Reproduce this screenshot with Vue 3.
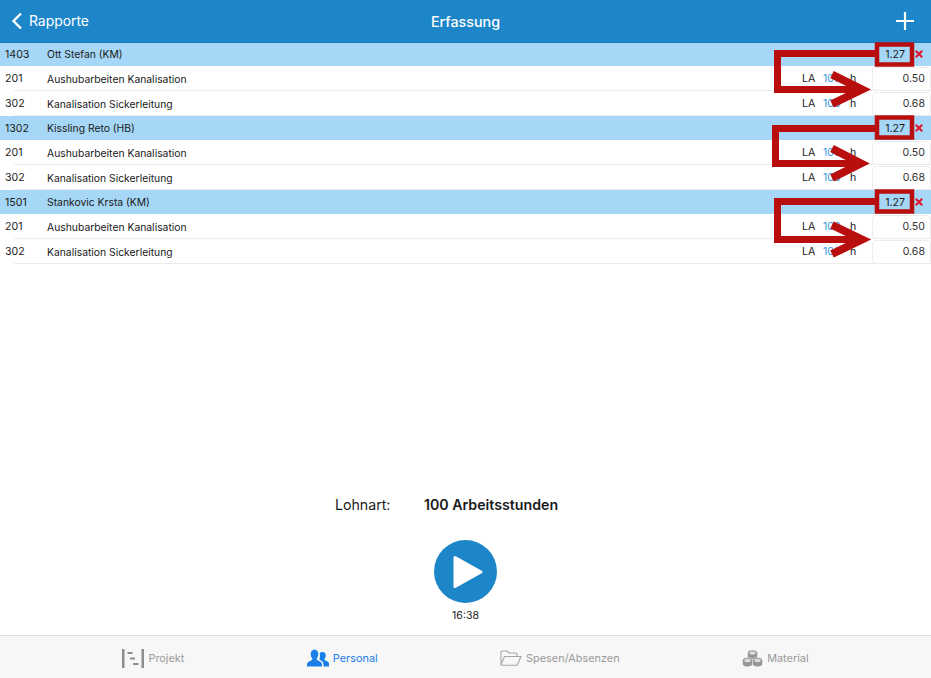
<script setup>
const groups = [
  { id: '1403', name: 'Ott Stefan (KM)' },
  { id: '1302', name: 'Kissling Reto (HB)' },
  { id: '1501', name: 'Stankovic Krsta (KM)' },
]
const lines = [
  { id: '201', name: 'Aushubarbeiten Kanalisation', value: '0.50' },
  { id: '302', name: 'Kanalisation Sickerleitung', value: '0.68' },
]
const marks = [
  { box: 44.5, line: 'M875 53.5H777.5V89.5H862', head: 'M832 74.5L862 89.5L832 104' },
  { box: 117.5, line: 'M875 128.5H775.5V163.5H861', head: 'M832 148.5L861 163.5L832 178' },
  { box: 191.5, line: 'M875 201.5H777.5V239.5H862', head: 'M832 225L862 239.5L832 254' },
]
const cubes = [
  { x: 5.5, y: 0 },
  { x: 0.5, y: 7.5 },
  { x: 10.5, y: 7.5 },
]
</script>

<template>
  <div class="screen">
    <header class="nav">
      <div class="back">
        <svg width="12" height="18" viewBox="0 0 12 18"><path d="M10 1.5L2.5 9L10 16.5" fill="none" stroke="#fff" stroke-width="2.4" /></svg>
        <span>Rapporte</span>
      </div>
      <div class="title">Erfassung</div>
      <svg class="plus" width="18" height="18" viewBox="0 0 18 18"><path d="M9 0V18M0 9H18" stroke="#fff" stroke-width="2.2" /></svg>
    </header>

    <main class="list">
      <section v-for="g in groups" :key="g.id">
        <div class="group">
          <span class="code">{{ g.id }}</span>
          <span class="name">{{ g.name }}</span>
          <span class="total">1.27</span>
          <span class="del">
            <svg width="8" height="8" viewBox="0 0 8 8"><path d="M.8 .8L7.200 7.200M7.200 .8L.8 7.200" stroke="#e2132a" stroke-width="2" /></svg>
          </span>
        </div>
        <div v-for="l in lines" :key="l.id" class="line">
          <span class="code">{{ l.id }}</span>
          <span class="name">{{ l.name }}</span>
          <span class="la">LA</span>
          <span class="num">100</span>
          <span class="unit">h</span>
          <span class="val">{{ l.value }}</span>
        </div>
      </section>
    </main>

    <div class="timer">
      <div class="kind"><span class="kind-label">Lohnart:</span><strong>100 Arbeitsstunden</strong></div>
      <button class="play" type="button" aria-label="Start">
        <svg width="32" height="34" viewBox="0 0 32 34"><path d="M3 2.5L29 17L3 31.5Z" fill="#fff" stroke="#fff" stroke-width="3" stroke-linejoin="round" /></svg>
      </button>
      <div class="time">16:38</div>
    </div>

    <nav class="tabs">
      <div class="tab">
        <svg width="22" height="19" viewBox="0 0 22 19" fill="#8e8e8e"><rect x="0" y="0" width="2.5" height="19" /><rect x="19.5" y="0" width="2.5" height="19" /><rect x="5.5" y="3" width="5" height="2" /><rect x="8" y="8.5" width="5" height="2" /><rect x="11" y="14" width="5.5" height="2" /></svg>
        <span>Projekt</span>
      </div>
      <div class="tab active">
        <svg width="22" height="18" viewBox="0 0 22 18" fill="#1a7fe8"><path d="M7.5 0.5C10 .5 11.300 2.700 11.300 5C11.300 7 10.500 8.500 9.700 9.500C9.500 10.500 10 11 11.500 11.700C13.500 12.600 15 13.500 15 15.500V17.500H0V15.500C0 13.500 1.500 12.600 3.500 11.700C5 11 5.500 10.500 5.300 9.500C4.500 8.500 3.700 7 3.700 5C3.700 2.700 5 .5 7.500 .5Z" /><path d="M15.500 3C17.500 3 18.800 4.500 18.800 6.500C18.800 8 18.200 9.200 17.500 10C17.300 10.800 17.800 11.200 19 11.800C20.700 12.600 22 13.300 22 15V17.500H16.500V15.500C16.500 13 14.700 11.800 13 11C12.500 10.700 12.300 10.400 12.400 10C12.900 8.800 13 7.500 13 6.500C13 5.500 12.900 4.800 12.700 4.200C13.300 3.400 14.300 3 15.500 3Z" /></svg>
        <span>Personal</span>
      </div>
      <div class="tab">
        <svg width="22" height="16" viewBox="0 0 22 16" fill="none" stroke="#a6a6a6" stroke-width="1.100"><path d="M1 14.500V2.500C1 1.500 1.500 1 2.500 1H7L9 3H15.500C16.500 3 17 3.500 17 4.500V6" /><path d="M1 14.500L4.500 6.500H21L17.500 14.500C17.300 15 17 15.200 16.500 15.200H2C1.300 15.200 1 15 1 14.500Z" /></svg>
        <span>Spesen/Absenzen</span>
      </div>
      <div class="tab">
        <svg width="21" height="17" viewBox="0 0 21 17">
          <g v-for="c in cubes" :key="c.x" :transform="`translate(${c.x} ${c.y})`">
            <path d="M0 2.800C0 1.300 2.200 0 5 0C7.800 0 10 1.300 10 2.800V6.500C10 8 7.800 9.300 5 9.300C2.200 9.300 0 8 0 6.500Z" fill="#959595" stroke="#f7f7f7" stroke-width=".5" />
            <ellipse cx="5" cy="3" rx="3.200" ry="1.700" fill="#dcdcdc" />
          </g>
        </svg>
        <span>Material</span>
      </div>
    </nav>

    <svg class="marks" width="931" height="678" viewBox="0 0 931 678" fill="none" stroke="#b90e0e">
      <g v-for="m in marks" :key="m.box">
        <rect x="877" :y="m.box" width="35" height="20" stroke-width="4.500" />
        <path :d="m.line" stroke-width="7" />
        <path :d="m.head" stroke-width="8" />
      </g>
    </svg>
  </div>
</template>

<style>
html, body { margin: 0; background: #fff; }
</style>

<style scoped>
.screen {
  position: relative;
  width: 931px;
  height: 678px;
  overflow: hidden;
  display: flex;
  flex-direction: column;
  background: #fff;
  color: #1a1a1a;
  font-family: Inter, "Liberation Sans", sans-serif;
}
.nav {
  height: 42px;
  flex: none;
  box-sizing: border-box;
  padding: 0 17px 0 11px;
  display: flex;
  align-items: center;
  justify-content: space-between;
  position: relative;
  z-index: 1;
  background: #1c86c9;
  color: #fff;
  box-shadow: 0 1px 0 #1a7cba;
}
.back { display: flex; align-items: center; gap: 6px; font-size: 13.9px; }
.title {
  position: absolute;
  left: 0;
  right: 0;
  text-align: center;
  font-size: 14.3px;
  font-weight: 500;
}
.list { flex: none; font-size: 10.6px; }
.group, .line {
  display: flex;
  align-items: center;
  box-sizing: border-box;
}
.group { height: 24px; background: #a6d7f6; }
.line { position: relative; height: 25px; background: #fff; }
.line::after {
  content: "";
  position: absolute;
  left: 14px;
  right: 0;
  bottom: 0;
  height: 1.5px;
  background: #ececec;
}
.code { width: 47px; flex: none; box-sizing: border-box; padding-left: 5px; }
.name { flex: 1; font-size: 10.35px; }
.total { width: 36px; text-align: right; margin-right: 9px; }
.del { width: 13px; display: flex; justify-content: flex-start; padding-left: 1px; margin-right: 3px; }
.la { width: 21px; }
.num { width: 27px; color: #3a94de; }
.unit { width: 22px; }
.val {
  position: relative;
  z-index: 1;
  width: 59px;
  height: 24px;
  box-sizing: border-box;
  padding-right: 5px;
  text-align: right;
  line-height: 22px;
  font-size: 10.6px;
  color: #333;
  border: 1px solid #ececec;
  border-radius: 4px;
  background: #fff;
}
.timer {
  flex: 1;
  display: flex;
  flex-direction: column;
  align-items: center;
  justify-content: flex-end;
  padding-bottom: 13px;
}
.kind {
  display: flex;
  align-items: baseline;
  font-size: 14.2px;
  margin-bottom: 27px;
  margin-right: 38px;
}
.kind-label { width: 89px; }
.kind strong { font-weight: 600; }
.play {
  width: 63px;
  height: 63px;
  padding: 0 0 0 5px;
  border: 0;
  border-radius: 50%;
  background: #1c86c9;
  display: flex;
  align-items: center;
  justify-content: center;
}
.time { font-size: 10.5px; margin-top: 6px; color: #222; }
.tabs {
  height: 43px;
  flex: none;
  box-sizing: border-box;
  padding-top: 2px;
  display: flex;
  justify-content: space-evenly;
  align-items: center;
  background: #f7f7f7;
  border-top: 1px solid #dedede;
  color: #9a9a9a;
  font-size: 10.9px;
}
.tab { display: flex; align-items: center; gap: 4px; }
.active { color: #1a7fe8; }
.marks { position: absolute; left: 0; top: 0; z-index: 2; pointer-events: none; }
</style>
